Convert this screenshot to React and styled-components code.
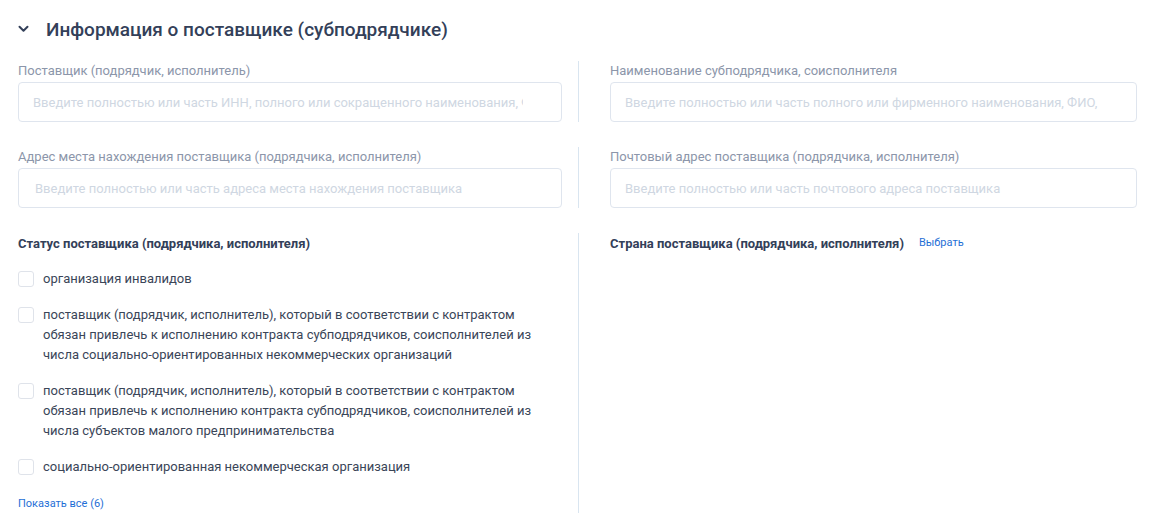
import React from "react";
import styled, { createGlobalStyle } from "styled-components";

const Global = createGlobalStyle`
  html, body { margin: 0; padding: 0; background: #fff; }
  body { font-family: Roboto, "Noto Sans", Arial, sans-serif; color: #334059; }
  * { box-sizing: border-box; }
`;

const Page = styled.div`
  padding: 14px 12px 0 18px;
  width: 1149px;
`;

const Header = styled.div`
  display: flex;
  align-items: center;
  gap: 17px;
  height: 30px;
  margin-bottom: 17px;
`;

const Chevron = styled.svg`
  width: 11px;
  height: 8px;
  flex: none;
`;

const Title = styled.h2`
  margin: 0;
  font-size: 19px;
  font-weight: 500;
  color: #334059;
`;

const Row = styled.div`
  display: flex;
  align-items: stretch;
  margin-bottom: ${(p) => p.$mb || 0}px;
`;

const Cell = styled.div`
  display: flex;
  flex-direction: column;
  width: ${(p) => (p.$w ? `${p.$w}px` : "auto")};
  flex: ${(p) => (p.$w ? "none" : "1")};
`;

const Divider = styled.div`
  width: 1px;
  background: #d9e5f0;
  margin: 0 31px 0 16px;
  flex: none;
`;

const Label = styled.label`
  font-size: 13px;
  line-height: 16px;
  color: #8c96aa;
  margin: 2px 0 3px;
`;

const Input = styled.input`
  height: 40px;
  width: 100%;
  border: 1px solid #dfe5ee;
  border-radius: 4px;
  padding: 0 38px 0 ${(p) => p.$pl || 14}px;
  font-family: inherit;
  font-size: 13px;
  color: #334059;
  outline: none;
  &::placeholder { color: #cfd7e2; }
`;

const Section = styled.div`
  display: flex;
  flex-direction: column;
  gap: 16px;
`;

const SectionHead = styled.div`
  display: flex;
  align-items: center;
  gap: 15px;
  height: 20px;
`;

const SectionTitle = styled.div`
  font-size: 13px;
  font-weight: 700;
  color: #334059;
`;

const Link = styled.a`
  font-size: 11px;
  color: #1f6fd6;
  text-decoration: none;
  cursor: pointer;
  line-height: 18px;
  margin-top: ${(p) => p.$mt || 0}px;
`;

const CheckItem = styled.label`
  display: flex;
  align-items: flex-start;
  gap: 9px;
  cursor: pointer;
`;

const Box = styled.span`
  width: 16px;
  height: 16px;
  border: 1px solid #dfe3ea;
  border-radius: 3px;
  flex: none;
  margin-top: 2px;
  background: #fff;
`;

const CheckText = styled.span`
  font-size: 13px;
  line-height: 20px;
  color: #3a4558;
  max-width: 500px;
`;

const statuses = [
  "организация инвалидов",
  "поставщик (подрядчик, исполнитель), который в соответствии с контрактом обязан привлечь к исполнению контракта субподрядчиков, соисполнителей из числа социально-ориентированных некоммерческих организаций",
  "поставщик (подрядчик, исполнитель), который в соответствии с контрактом обязан привлечь к исполнению контракта субподрядчиков, соисполнителей из числа субъектов малого предпринимательства",
  "социально-ориентированная некоммерческая организация",
];

export default function App() {
  return (
    <>
      <Global />
      <Page>
        <Header>
          <Chevron viewBox="0 0 11 8">
            <path d="M1.5 1.8 L5.5 5.8 L9.5 1.8" fill="none" stroke="#334059" strokeWidth="2" strokeLinecap="round" strokeLinejoin="round" />
          </Chevron>
          <Title>Информация о поставщике (субподрядчике)</Title>
        </Header>

        <Row $mb={25}>
          <Cell $w={544}>
            <Label>Поставщик (подрядчик, исполнитель)</Label>
            <Input $pl={14} placeholder="Введите полностью или часть ИНН, полного или сокращенного наименования, ФИО" />
          </Cell>
          <Divider />
          <Cell>
            <Label>Наименование субподрядчика, соисполнителя</Label>
            <Input placeholder="Введите полностью или часть полного или фирменного наименования, ФИО, ИНН" />
          </Cell>
        </Row>

        <Row $mb={25}>
          <Cell $w={544}>
            <Label>Адрес места нахождения поставщика (подрядчика, исполнителя)</Label>
            <Input $pl={16} placeholder="Введите полностью или часть адреса места нахождения поставщика" />
          </Cell>
          <Divider />
          <Cell>
            <Label>Почтовый адрес поставщика (подрядчика, исполнителя)</Label>
            <Input placeholder="Введите полностью или часть почтового адреса поставщика" />
          </Cell>
        </Row>

        <Row>
          <Cell $w={544}>
            <Section>
              <SectionHead>
                <SectionTitle>Статус поставщика (подрядчика, исполнителя)</SectionTitle>
              </SectionHead>
              {statuses.map((s, i) => (
                <CheckItem key={i}>
                  <Box />
                  <CheckText>{s}</CheckText>
                </CheckItem>
              ))}
              <Link $mt={2}>Показать все (6)</Link>
            </Section>
          </Cell>
          <Divider />
          <Cell>
            <Section>
              <SectionHead>
                <SectionTitle>Страна поставщика (подрядчика, исполнителя)</SectionTitle>
                <Link>Выбрать</Link>
              </SectionHead>
            </Section>
          </Cell>
        </Row>
      </Page>
    </>
  );
}
